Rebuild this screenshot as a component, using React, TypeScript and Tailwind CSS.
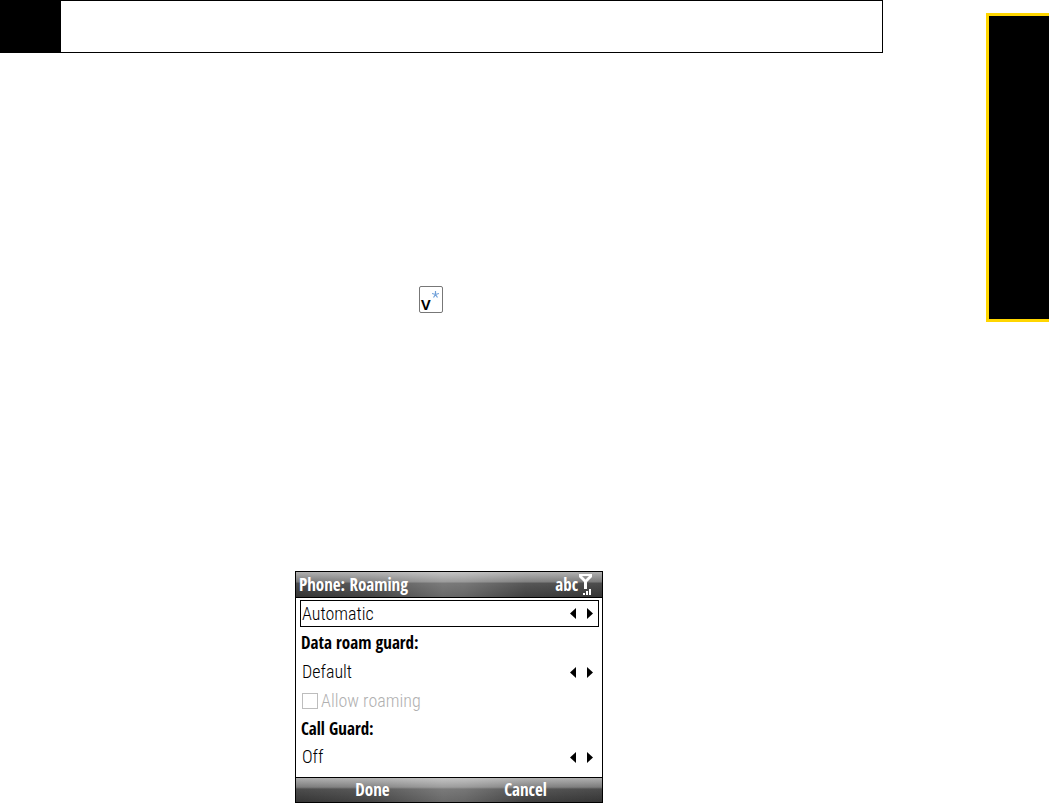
import { useState } from "react";

const boldText =
  "font-['Open_Sans_Condensed','Open_Sans',sans-serif] text-[17px] font-bold";

const lightText =
  "font-['Roboto_Condensed_Light','Roboto_Condensed',Roboto,sans-serif] text-lg font-normal";

const bar =
  "bg-[linear-gradient(to_bottom,#b0b0b0_0%,#7c7c7c_38%,#4c4c4c_46%,#353535_100%)]";

const sheen =
  "bg-[linear-gradient(to_right,transparent_0%,rgba(255,255,255,0.08)_25%,rgba(255,255,255,0.26)_48%,rgba(255,255,255,0.24)_55%,rgba(255,255,255,0.06)_75%,transparent_100%)]";

type PickerProps = {
  label: string;
  options: string[];
  active?: boolean;
};

const Picker = ({ label, options, active }: PickerProps) => {
  const [index, setIndex] = useState(0);
  const move = (step: number) =>
    setIndex((index + step + options.length) % options.length);

  return (
    <div
      className={`flex items-center border pr-[5px] pl-px ${
        active ? "mb-px h-[27px] border-black" : "h-7 border-transparent"
      }`}
    >
      <select
        aria-label={label}
        value={options[index]}
        onChange={(e) => setIndex(options.indexOf(e.target.value))}
        className={`min-w-0 flex-1 appearance-none bg-transparent leading-6 text-black outline-none ${lightText}`}
      >
        {options.map((option) => (
          <option key={option}>{option}</option>
        ))}
      </select>
      <div className="flex gap-[11px]">
        <button type="button" aria-label="Previous" onClick={() => move(-1)}>
          <svg width="6" height="11" viewBox="0 0 6 11">
            <path d="M6 0v11L0 5.5z" />
          </svg>
        </button>
        <button type="button" aria-label="Next" onClick={() => move(1)}>
          <svg width="6" height="11" viewBox="0 0 6 11">
            <path d="M0 0v11l6-5.5z" />
          </svg>
        </button>
      </div>
    </div>
  );
};

const Signal = () => (
  <svg width="14" height="21" viewBox="0 0 14 21" fill="#fff">
    <path
      fillRule="evenodd"
      d="M0 0h13v3L8 8v7H5V8L0 3zM3 2h7L6.500 5.500z"
    />
    <path d="M4 19h2v2H4zM7 17h2v4H7zM10 15h2v6h-2z" />
  </svg>
);

const StarKey = () => (
  <kbd className="flex h-[27px] w-6 items-start justify-between rounded-xs border border-[#777] pr-[3px] pl-px font-['Open_Sans',sans-serif] text-lg leading-8 font-semibold text-black">
    v
    <svg width="7" height="7" viewBox="0 0 7 7" className="mt-1">
      <path
        d="M3.500 0v3.500M0 2.500l3.500 1 3.500-1M1.500 6.500l2-3 2 3"
        fill="none"
        stroke="#6f9fd8"
        strokeWidth="1.200"
      />
    </svg>
  </kbd>
);

const Phone = () => (
  <div className={`w-[308px] border border-black bg-white ${boldText}`}>
    <div className={`border-b border-black ${bar}`}>
      <div
        className={`flex h-[25px] items-center justify-between pr-[9px] pl-[3px] leading-6 text-white ${sheen}`}
      >
        <h1>Phone: Roaming</h1>
        <div className="flex items-center gap-px">
          <span>abc</span>
          <Signal />
        </div>
      </div>
    </div>
    <div className="flex flex-col gap-px pt-[2px] pr-[3px] pb-[6px] pl-1">
      <Picker
        label="Roaming"
        options={["Automatic", "Roaming only", "Home only"]}
        active
      />
      <h2 className="h-7 px-px leading-7">Data roam guard:</h2>
      <Picker label="Data roam guard" options={["Default", "On", "Off"]} />
      <label
        className={`flex h-[27px] items-center gap-[3px] pl-[2px] text-[#b0b0b0] ${lightText}`}
      >
        <input
          type="checkbox"
          disabled
          className="size-4 appearance-none border border-[#bdbdbd]"
        />
        Allow roaming
      </label>
      <h2 className="h-[27px] px-px leading-7">Call Guard:</h2>
      <Picker label="Call Guard" options={["Off", "On"]} />
    </div>
    <div className={`border-t border-black ${bar}`}>
      <div className={`grid h-6 grid-cols-2 leading-6 text-white ${sheen}`}>
        <button type="button">Done</button>
        <button type="button">Cancel</button>
      </div>
    </div>
  </div>
);

export default function App() {
  return (
    <div className="flex items-start bg-white">
      <main className="min-w-0 flex-1">
        <header className="flex h-[53px] border border-l-0 border-black">
          <div className="w-[61px] bg-black" />
        </header>
        <div className="mt-[233px] ml-[419px]">
          <StarKey />
        </div>
        <div className="mt-[258px] ml-[295px]">
          <Phone />
        </div>
      </main>
      <aside className="mt-[13px] ml-[103px] h-[309px] w-[63px] border-[3px] border-r-0 border-[#ffd600] bg-black" />
    </div>
  );
}
